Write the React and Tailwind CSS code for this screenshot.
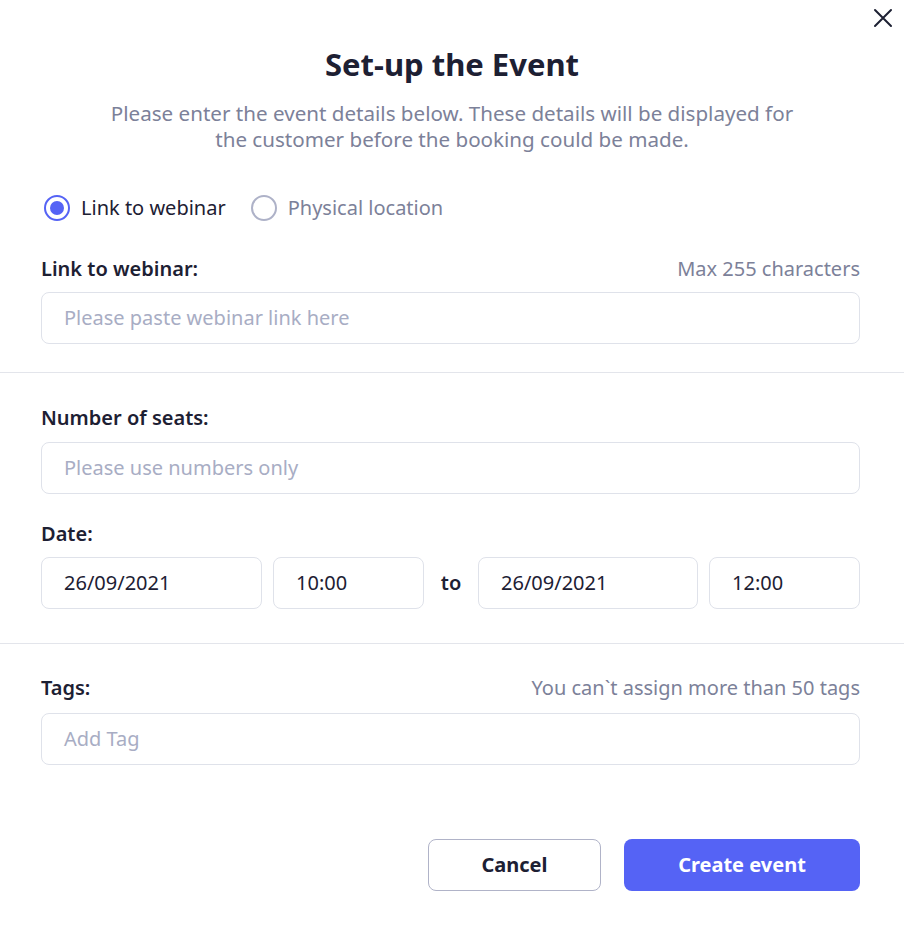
import React from "react";

const font = { fontFamily: '"Noto Sans", "Open Sans", sans-serif' };

function Radio({ checked, label }) {
  return (
    <div className="flex items-center gap-[11px]">
      <div
        className={
          "w-[26px] h-[26px] rounded-full border-[2.5px] flex items-center justify-center " +
          (checked ? "border-[#5563f5]" : "border-[#aeb2c8]")
        }
      >
        {checked && <div className="w-[14px] h-[14px] rounded-full bg-[#5563f5]" />}
      </div>
      <span className={"text-[20px] leading-[26px] " + (checked ? "text-[#1d2033]" : "text-[#7c8199]")}>{label}</span>
    </div>
  );
}

function Field({ placeholder, value, className = "" }) {
  return (
    <div
      className={
        "h-[52px] rounded-[8px] border border-[#dfe2ea] flex items-center px-[22px] text-[20px] bg-white " +
        className
      }
    >
      {value ? (
        <span className="text-[#1d2033]">{value}</span>
      ) : (
        <span className="text-[#a8adc4]">{placeholder}</span>
      )}
    </div>
  );
}

function Label({ children, hint }) {
  return (
    <div className="flex items-center justify-between h-[24px] leading-[24px]">
      <span className="text-[20px] font-semibold text-[#1d2033]">{children}</span>
      {hint && <span className="text-[20px] text-[#7c8199]">{hint}</span>}
    </div>
  );
}

export default function App() {
  return (
    <div className="relative w-[904px] h-[930px] bg-white overflow-hidden" style={font}>
      <button className="absolute top-[8px] right-[11px] w-[20px] h-[20px] flex items-center justify-center">
        <svg width="20" height="20" viewBox="0 0 20 20" fill="none" stroke="#1d2033" strokeWidth="2" strokeLinecap="round">
          <path d="M2 2 L18 18 M18 2 L2 18" />
        </svg>
      </button>

      <h1 className="mt-[46px] h-[36px] leading-[36px] text-center text-[31px] font-bold text-[#1d2033]">
        Set-up the Event
      </h1>
      <p className="mt-[18px] mx-auto w-[800px] text-center text-[20.6px] leading-[26px] text-[#7c8199]">
        Please enter the event details below. These details will be displayed for
        <br />
        the customer before the booking could be made.
      </p>

      <div className="px-[44px] mt-[43px] flex items-center gap-[25px] h-[26px]">
        <Radio checked label="Link to webinar" />
        <Radio label="Physical location" />
      </div>

      <div className="pl-[41px] pr-[44px] mt-[36px]">
        <Label hint="Max 255 characters">Link to webinar:</Label>
        <Field className="mt-[11px]" placeholder="Please paste webinar link here" />
      </div>

      <div className="mt-[28px] h-px bg-[#e3e5eb]" />

      <div className="pl-[41px] pr-[44px] mt-[33px]">
        <Label>Number of seats:</Label>
        <Field className="mt-[12px]" placeholder="Please use numbers only" />

        <div className="mt-[28px]">
          <Label>Date:</Label>
        </div>
        <div className="mt-[11px] flex items-center">
          <Field className="w-[221px]" value="26/09/2021" />
          <Field className="w-[151px] ml-[11px]" value="10:00" />
          <div className="w-[54px] text-center text-[20px] font-semibold text-[#1d2033]">to</div>
          <Field className="w-[220px]" value="26/09/2021" />
          <Field className="w-[151px] ml-[11px]" value="12:00" />
        </div>
      </div>

      <div className="mt-[34px] h-px bg-[#e3e5eb]" />

      <div className="pl-[41px] pr-[44px] mt-[32px]">
        <Label hint="You can`t assign more than 50 tags">Tags:</Label>
        <Field className="mt-[13px]" placeholder="Add Tag" />

        <div className="mt-[74px] flex justify-end gap-[23px]">
          <button className="w-[173px] h-[52px] rounded-[8px] border border-[#b0b3c8] bg-white text-[20px] font-bold text-[#1d2033]">
            Cancel
          </button>
          <button className="w-[236px] h-[52px] rounded-[8px] bg-[#5563f5] text-[20px] font-bold text-white">
            Create event
          </button>
        </div>
      </div>
    </div>
  );
}
